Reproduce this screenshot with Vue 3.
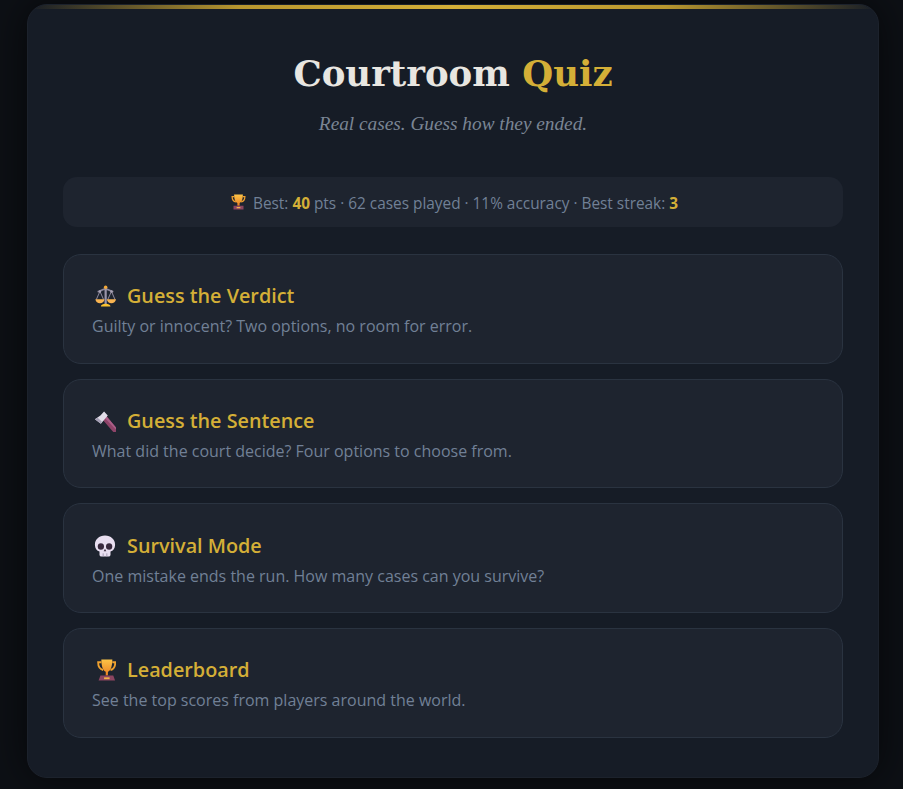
<script setup>
const modes = [
  { icon: 'scales', title: 'Guess the Verdict', desc: 'Guilty or innocent? Two options, no room for error.' },
  { icon: 'hammer', title: 'Guess the Sentence', desc: 'What did the court decide? Four options to choose from.' },
  { icon: 'skull', title: 'Survival Mode', desc: 'One mistake ends the run. How many cases can you survive?' },
  { icon: 'trophy', title: 'Leaderboard', desc: 'See the top scores from players around the world.' }
]
</script>

<template>
  <div class="page">
    <main class="panel">
      <div class="topbar"></div>
      <header class="head">
        <h1 class="title">Courtroom <span class="gold">Quiz</span></h1>
        <p class="sub">Real cases. Guess how they ended.</p>
      </header>
      <div class="stats">
        <svg class="ico-small" viewBox="0 0 24 24">
          <defs>
            <linearGradient id="cup0" x1="0" y1="0" x2="0" y2="1"><stop offset="0" stop-color="#fcc447"/><stop offset="1" stop-color="#ea7f22"/></linearGradient>
          </defs>
          <path d="M5 3.500H1.800C1.800 8 4 11 8 12M19 3.500h3.200C22.200 8 20 11 16 12" fill="none" stroke="#eea02e" stroke-width="2"/>
          <path d="M5 0h14c0 8-2 12-5.200 13.500V18h-3.600v-4.500C7 12 5 8 5 0z" fill="url(#cup0)"/>
          <rect x="4" y="18" width="16" height="6" fill="#8b4560"/>
          <rect x="9" y="20" width="6" height="2" fill="#f2b04a"/>
        </svg>
        <span>Best: <b class="gold">40</b> pts · 62 cases played · 11% accuracy · Best streak: <b class="gold">3</b></span>
      </div>
      <div class="modes">
        <button v-for="m in modes" :key="m.title" class="mode" type="button">
          <span class="mode-title">
            <svg v-if="m.icon === 'scales'" class="ico" viewBox="0 0 24 24">
              <path d="M4 7.500C8 6 10 4.500 12.500 4.500S17 6 21 7.500" stroke="#8d879b" stroke-width="1.800" fill="none"/>
              <rect x="11.500" y="2" width="2.400" height="19" fill="#9a94a8"/>
              <circle cx="12.700" cy="2.400" r="1.900" fill="#f4a93a"/>
              <path d="M6.500 7 2.500 16M6.500 7 10.500 16M19 7 15 16M19 7 23 16" stroke="#8d879b" stroke-width="1.100" fill="none"/>
              <circle cx="6.500" cy="7" r="1.300" fill="#a9a3b6"/>
              <circle cx="19" cy="7" r="1.300" fill="#a9a3b6"/>
              <path d="M1.500 15.500h10c-.4 3-2.500 4.500-5 4.500s-4.600-1.500-5-4.500zM14 15.500h10c-.4 3-2.500 4.500-5 4.500s-4.600-1.500-5-4.500z" fill="#f9b451"/>
              <path d="M7.500 23.500c0-2 2.500-3 5.200-3s5.300 1 5.300 3z" fill="#fcc22e"/>
            </svg>
            <svg v-else-if="m.icon === 'hammer'" class="ico" viewBox="0 0 24 24">
              <path d="M9 10 13 6 24.500 19.700a2.400 2.400 0 0 1-4.200 3.600z" fill="#8e4469"/>
              <path d="M11 8 13 6 24.500 19.700 23.500 21z" fill="#ab5e88"/>
              <path d="M1 10 7 6 11 1.500 15 6 7.500 15z" fill="#e1dde8"/>
              <path d="M1 10 4 8.500 8.500 12.500 7.500 15z" fill="#a59fb5"/>
            </svg>
            <svg v-else-if="m.icon === 'skull'" class="ico" viewBox="0 0 24 24">
              <path d="M12 0.500C5.500 0.500 1 5 1 10.500c0 4 2 6.500 5 7.500V21.500c0 1.200 1 2 2 2h8c1 0 2-.8 2-2V18c3-1 5-3.500 5-7.500C23 5 18.500 .5 12 .5z" fill="#e8def0"/>
              <ellipse cx="7.500" cy="12.500" rx="3.400" ry="3.500" fill="#38293d"/>
              <ellipse cx="16.500" cy="12.500" rx="3.400" ry="3.500" fill="#38293d"/>
              <path d="M12 15l1.400 2.800h-2.800z" fill="#38293d"/>
              <path d="M10 20v3.500M14 20v3.500" stroke="#9f95ae" stroke-width="1"/>
            </svg>
            <svg v-else class="ico" viewBox="0 0 24 24">
              <defs>
                <linearGradient id="cup1" x1="0" y1="0" x2="0" y2="1"><stop offset="0" stop-color="#fcc447"/><stop offset="1" stop-color="#ea7f22"/></linearGradient>
              </defs>
              <path d="M8 3.500H4.500C4.500 8 6 11 10 12M20 3.500h3.200C23.200 8 22 11 18 12" fill="none" stroke="#eea02e" stroke-width="2"/>
              <path d="M8 .5h12c0 8-2 12-4.800 13.500V18h-2.400v-4C10 12.500 8 8.500 8 .5z" fill="url(#cup1)"/>
              <path d="M7 18h14l2 5.500H5z" fill="#8b4560"/>
              <rect x="11" y="20" width="6" height="2" fill="#f2b04a"/>
            </svg>
            <span>{{ m.title }}</span>
          </span>
          <span class="mode-desc">{{ m.desc }}</span>
        </button>
      </div>
    </main>
  </div>
</template>

<style>
html, body { margin: 0; background: #0d1015; }
</style>

<style scoped>
.page {
  box-sizing: border-box;
  height: 789px;
  overflow: hidden;
  padding: 4px 24px 0 27px;
  background: #0d1015;
  font-family: "Open Sans", "Noto Sans", sans-serif;
}
.panel {
  position: relative;
  box-sizing: border-box;
  height: 774px;
  padding: 47px 35px 0;
  background: #161c26;
  border: 1px solid #1c222c;
  border-radius: 20px;
  box-shadow: 0 0 40px rgba(0, 0, 0, 0.6);
  overflow: hidden;
}
.topbar {
  position: absolute;
  top: 0;
  left: 0;
  right: 0;
  height: 4px;
  background: linear-gradient(90deg, transparent, #b8962e, #d4af37, #b8962e, transparent);
}
.head { text-align: center; }
.title {
  margin: 0;
  font: 700 35.500px/44px "DejaVu Serif", serif;
  color: #e8e6e1;
}
.gold { color: #d4af37; }
.sub {
  margin: 16px 0 0;
  font: italic 19.300px/24px "Liberation Serif", serif;
  color: #7a8594;
}
.stats {
  box-sizing: border-box;
  margin-top: 41px;
  height: 50px;
  padding: 2px 0 0 3px;
  border-radius: 14px;
  background: #1e242f;
  display: flex;
  align-items: center;
  justify-content: center;
  gap: 7px;
  font-size: 15.380px;
  color: #718096;
}
.stats b { font-weight: 700; }
.ico-small { width: 15px; height: 16px; margin-top: -2px; }
.modes {
  margin-top: 27px;
  display: flex;
  flex-direction: column;
  gap: 15px;
}
.mode {
  box-sizing: border-box;
  height: 109.670px;
  padding: 2px 28px 0;
  border: 1px solid #2a3340;
  border-radius: 18px;
  background: #1e242f;
  display: flex;
  flex-direction: column;
  justify-content: center;
  gap: 5px;
  text-align: left;
  font-family: inherit;
}
.mode-title {
  display: flex;
  align-items: center;
  gap: 11px;
  font-size: 19.800px;
  line-height: 28px;
  font-weight: 600;
  color: #d4af37;
}
.ico { width: 22px; height: 22px; margin-left: 2px; }
.mode-desc {
  font-size: 16px;
  line-height: 22px;
  color: #718096;
}
</style>
